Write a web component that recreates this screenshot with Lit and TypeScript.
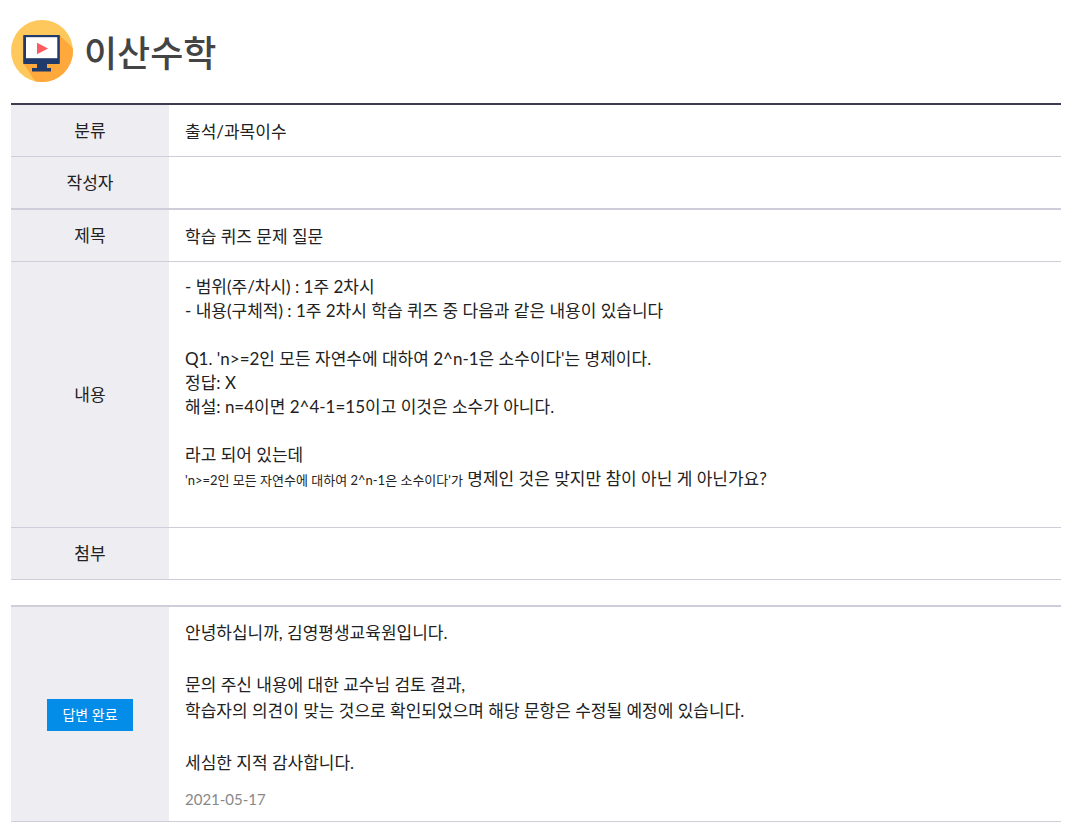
import { LitElement, html, css, nothing } from "lit";
import { customElement } from "lit/decorators.js";

@customElement("course-icon")
class CourseIcon extends LitElement {
  static styles = css`
    :host { display: block; flex: none; width: 62px; height: 62px; }
    .art { display: block; width: 100%; height: 100%; }
  `;
  render() {
    return html`
      <svg class="art" viewBox="0 0 62 62" aria-hidden="true">
        <defs><clipPath id="disc"><circle cx="31" cy="31" r="31" /></clipPath></defs>
        <g clip-path="url(#disc)">
          <rect width="62" height="62" fill="#ffc85c" />
          <path d="M48.700 15 L72 38.300 V72 H31 L12.500 43.500 Z" fill="#ffa83b" />
        </g>
        <path d="M13 15h35a.8.8 0 0 1 .8.8v27.400a.8.8 0 0 1-.8.8H13a.8.8 0 0 1-.8-.8V15.800a.8.8 0 0 1 .8-.8z" fill="#1f3a6b" />
        <rect x="15" y="17.200" width="31.300" height="21" fill="#fff" />
        <path d="M26 22.800 L37 28.500 L26 34.200 Z" fill="#ff5a5f" />
        <path d="M26 43.500h10v4.500h4v3.500H21v-3.500h5z" fill="#1f3a6b" />
      </svg>
    `;
  }
}

@customElement("app-root")
class AppRoot extends LitElement {
  static styles = css`
    :host {
      display: block;
      padding: 20px 13px 6px 11px;
      background: #fff;
      color: #222;
      font-family: Lato, "Noto Sans CJK KR", sans-serif;
      font-size: 17px;
      font-weight: 400;
      line-height: 24px;
    }
    .heading { display: flex; align-items: center; gap: 11px; margin-bottom: 21px; }
    .title { margin: 0; padding-top: 4px; font-size: 36px; line-height: 48px; font-weight: 500; color: #444; }
    .sheet { width: 100%; table-layout: fixed; border-collapse: separate; border-spacing: 0; }
    .question { border-top: 2px solid #3d3d52; margin-bottom: 25px; }
    .answer { border-top: 2px solid #cfcdd9; }
    .label, .value { height: 28px; border-bottom: 1px solid #cfcdd9; vertical-align: middle; }
    .label { width: 126px; padding: 12px 16px 11px; background: #eeedf2; font-weight: 400; text-align: center; }
    .value { padding: 13px 16px 10px; text-align: left; }
    .strong .label, .strong .value { border-bottom-width: 2px; }
    .post { margin: 0 0 25px; white-space: pre-line; }
    .small { font-size: 13px; }
    .badge { display: block; width: fit-content; margin: 0 auto; padding: 4px 15px; background: #048ce9; color: #fff; font-size: 14px; }
    .reply { margin: 0 0 11px; line-height: 26px; white-space: pre-line; }
    .date { display: block; font-size: 15px; color: #888; }
  `;

  private quoted = "'n>=2인 모든 자연수에 대하여 2^n-1은 소수이다'";

  private post = `- 범위(주/차시) : 1주 2차시
- 내용(구체적) : 1주 2차시 학습 퀴즈 중 다음과 같은 내용이 있습니다

Q1. ${this.quoted}는 명제이다.
정답: X
해설: n=4이면 2^4-1=15이고 이것은 소수가 아니다.

라고 되어 있는데
`;

  private reply = `안녕하십니까, 김영평생교육원입니다.

문의 주신 내용에 대한 교수님 검토 결과,
학습자의 의견이 맞는 것으로 확인되었으며 해당 문항은 수정될 예정에 있습니다.

세심한 지적 감사합니다.`;

  private row(label: string, value: unknown, strong = false) {
    return html`<tr class=${strong ? "strong" : ""}>
      <th class="label" scope="row">${label}</th>
      <td class="value">${value}</td>
    </tr>`;
  }

  render() {
    return html`
      <header class="heading">
        <course-icon></course-icon>
        <h1 class="title">이산수학</h1>
      </header>
      <main>
        <table class="sheet question">
          <tbody>
            ${this.row("분류", "출석/과목이수")}
            ${this.row("작성자", nothing, true)}
            ${this.row("제목", "학습 퀴즈 문제 질문")}
            ${this.row("내용", html`<p class="post">${this.post}<span class="small">${this.quoted}가</span> 명제인 것은 맞지만 참이 아닌 게 아닌가요?</p>`)}
            ${this.row("첨부", nothing)}
          </tbody>
        </table>
        <table class="sheet answer">
          <tbody>
            <tr>
              <th class="label" scope="row"><span class="badge">답변 완료</span></th>
              <td class="value"><p class="reply">${this.reply}</p><time class="date" datetime="2021-05-17">2021-05-17</time></td>
            </tr>
          </tbody>
        </table>
      </main>
    `;
  }
}
